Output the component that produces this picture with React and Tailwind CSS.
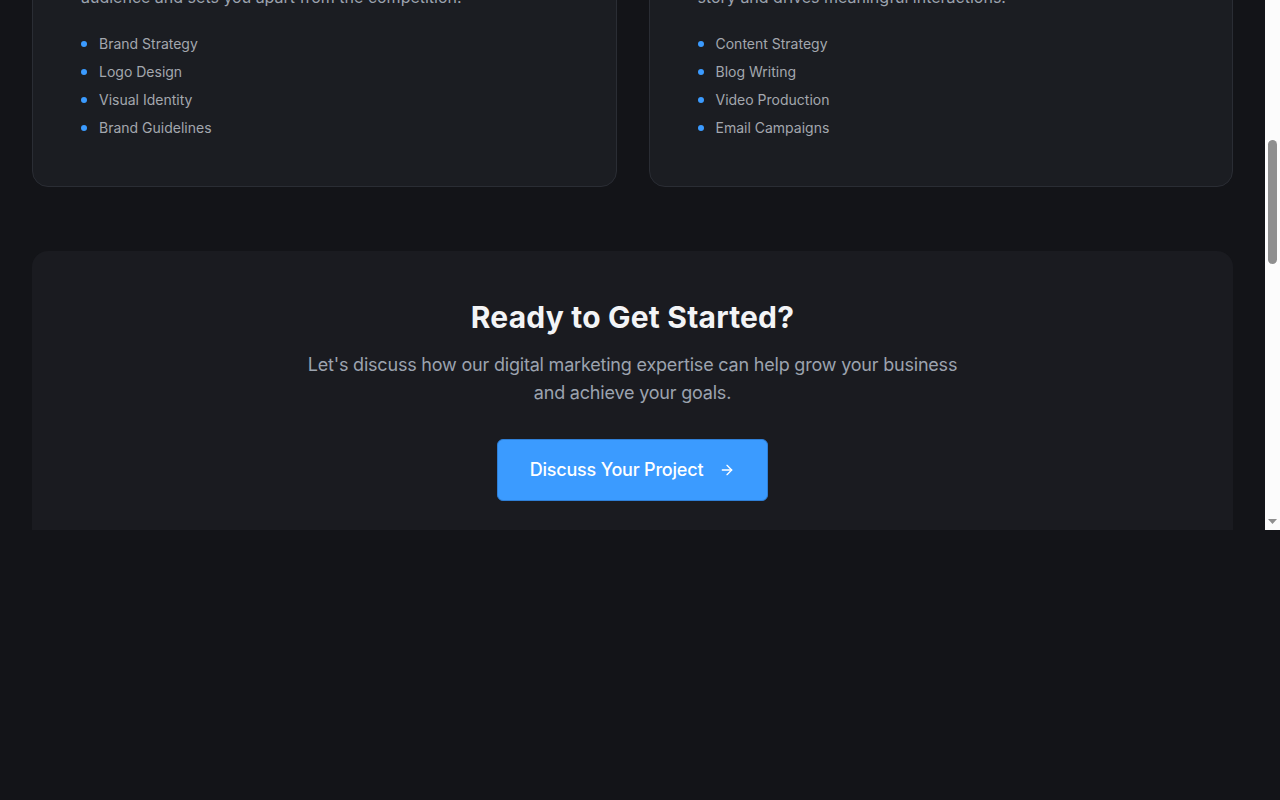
import { useEffect, useRef } from "react";
import { ArrowRight, Palette, PenTool } from "lucide-react";

const services = [
  {
    icon: Palette,
    title: "Branding & Identity",
    text: "Distinctive brand identities that resonate with your target audience and sets you apart from the competition.",
    items: ["Brand Strategy", "Logo Design", "Visual Identity", "Brand Guidelines"],
  },
  {
    icon: PenTool,
    title: "Content Marketing",
    text: "Compelling content that connects with your audience, tells your story and drives meaningful interactions.",
    items: ["Content Strategy", "Blog Writing", "Video Production", "Email Campaigns"],
  },
];

function ServiceCard({ service }) {
  const Icon = service.icon;
  return (
    <div className="rounded-2xl border border-[#2a2d34] bg-[#1b1d22] p-12">
      <div className="mb-6 flex h-14 w-14 items-center justify-center rounded-xl bg-[#3b9bff]/10 text-[#3b9bff]">
        <Icon className="h-7 w-7" />
      </div>
      <h3 className="mb-4 text-2xl font-bold text-white">{service.title}</h3>
      <p className="mb-6 text-base leading-relaxed text-[#9ca3af]">{service.text}</p>
      <ul className="space-y-2">
        {service.items.map((item) => (
          <li key={item} className="flex items-center gap-3 text-sm text-[#a3a7ae]">
            <span className="h-1.5 w-1.5 rounded-full bg-[#3b9bff]" />
            {item}
          </li>
        ))}
      </ul>
    </div>
  );
}

// the frame's scrollbar, drawn since the browser hides native ones
function Scrollbar() {
  return (
    <div className="flex w-[15px] shrink-0 flex-col items-center bg-[#fcfcfc] pt-[140px] pb-[5px]">
      <div className="h-[124px] w-[9px] rounded-full bg-[#8f8f8f]" />
      <div className="flex-1" />
      <svg width="9" height="6" viewBox="0 0 9 6">
        <path d="M0 0h9L4.5 5z" fill="#8f8f8f" />
      </svg>
    </div>
  );
}

export default function App() {
  const scrollRef = useRef(null);
  const ctaRef = useRef(null);

  useEffect(() => {
    if (scrollRef.current && ctaRef.current) {
      scrollRef.current.scrollTop = ctaRef.current.offsetTop - 251;
    }
  }, []);

  return (
    <div className="min-h-screen bg-[#131418]" style={{ fontFamily: "Inter, 'Noto Sans', sans-serif" }}>
      <div className="flex h-[530px]">
        <div ref={scrollRef} className="relative min-w-0 flex-1 overflow-hidden bg-[#131418]">
          {/* Intro */}
          <section className="px-8 pt-24 pb-16 text-center">
            <p className="mb-3 text-sm font-semibold uppercase tracking-widest text-[#3b9bff]">What We Do</p>
            <h1 className="mb-4 text-5xl font-bold text-white">Our Services</h1>
            <p className="mx-auto max-w-2xl text-lg text-[#9ca3af]">
              Comprehensive digital marketing solutions tailored to your business needs.
            </p>
          </section>

          {/* Services */}
          <section className="px-8">
            <div className="grid grid-cols-2 gap-8">
              {services.map((s) => (
                <ServiceCard key={s.title} service={s} />
              ))}
            </div>
          </section>

          {/* CTA */}
          <section ref={ctaRef} className="mx-8 mt-16 rounded-2xl bg-[#1a1b20] p-12 text-center">
            <h2 className="mb-4 text-3xl font-bold tracking-[0.2px] text-[#f3f4f6]">Ready to Get Started?</h2>
            <p className="mx-auto mb-8 max-w-2xl text-lg leading-7 tracking-[-0.2px] text-[#9ca3af]">
              Let's discuss how our digital marketing expertise can help grow your business and achieve your goals.
            </p>
            <button className="inline-flex items-center gap-4 rounded-md border border-[#2f7fd6] bg-[#3b9bff] px-8 py-4 text-lg font-medium tracking-[-0.2px] text-white">
              Discuss Your Project
              <ArrowRight className="h-4 w-4" />
            </button>
          </section>

          {/* Footer */}
          <footer className="mt-24 border-t border-[#23262c] px-8 pt-16 pb-12">
            <div className="grid grid-cols-4 gap-8">
              <div>
                <span className="text-xl font-bold text-white">
                  Digital<span className="text-[#3b9bff]">Agency</span>
                </span>
                <p className="mt-4 text-sm leading-6 text-[#9ca3af]">
                  Helping brands grow through strategy, design and content.
                </p>
              </div>
              {[
                ["Services", ["Branding", "Content", "SEO", "Social Media"]],
                ["Company", ["About", "Careers", "Blog", "Contact"]],
                ["Legal", ["Privacy", "Terms", "Cookies"]],
              ].map(([title, links]) => (
                <div key={title}>
                  <h4 className="text-sm font-semibold text-white">{title}</h4>
                  <ul className="mt-4 space-y-3 text-sm text-[#9ca3af]">
                    {links.map((l) => (
                      <li key={l}>{l}</li>
                    ))}
                  </ul>
                </div>
              ))}
            </div>
            <div className="mt-16 border-t border-[#23262c] pt-8 text-sm text-[#6b7280]">
              © 2024 DigitalAgency. All rights reserved.
            </div>
          </footer>
        </div>
        <Scrollbar />
      </div>
    </div>
  );
}
